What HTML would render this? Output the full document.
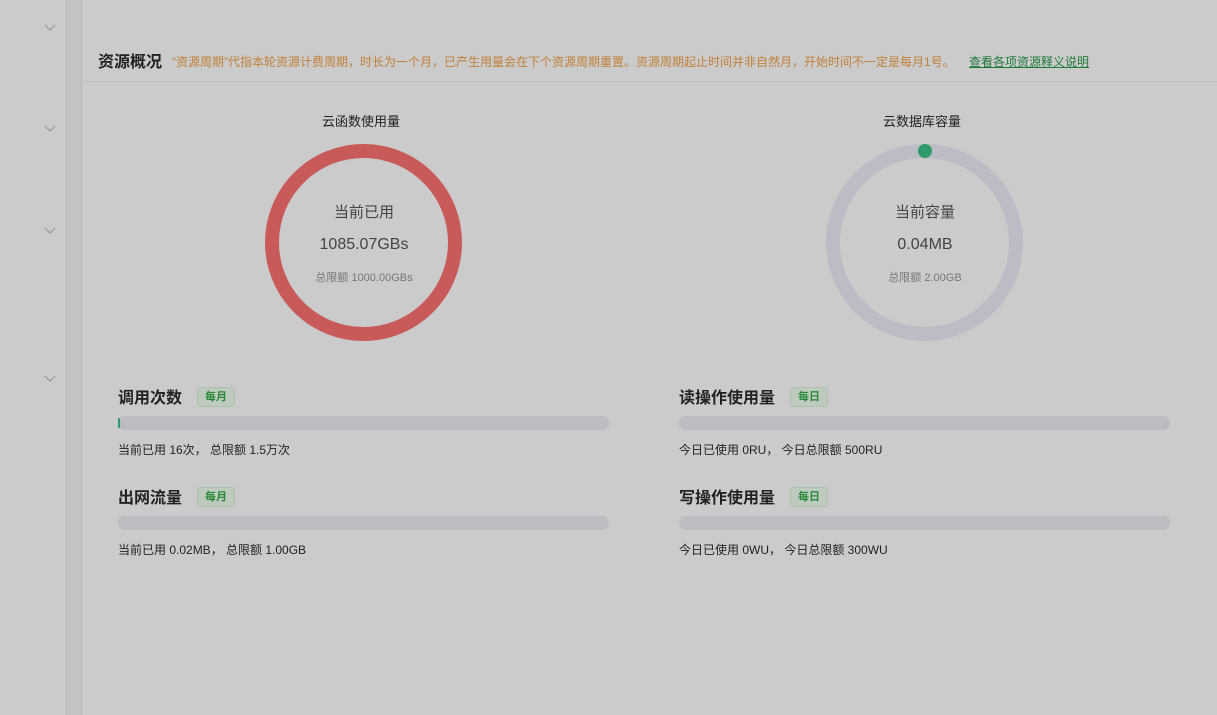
<!DOCTYPE html>
<html><head><meta charset="utf-8"><style>
*{margin:0;padding:0;box-sizing:border-box}
body{width:1217px;height:715px;background:#cbcbcb;font-family:"Liberation Sans","Noto Sans CJK SC",sans-serif;position:relative;overflow:hidden;color:#222}
.strip{position:absolute;left:66px;top:0;width:16px;height:715px;background:#c3c3c3;border-left:1px solid #bababa;border-right:1px solid #b8b8b8}
.chev{position:absolute;left:44px;width:12px;height:8px}
.abs{position:absolute;white-space:nowrap}
.hr{position:absolute;left:82px;right:0;top:81px;height:1px;background:#bcbcbc}
.title{font-size:16px;font-weight:bold;color:#222}
.tag{display:inline-block;font-size:11px;font-weight:bold;color:#2a8a3a;background:#bdcabd;border:1px solid #adc2ad;border-radius:3px;padding:2px 7px;line-height:14px}
.bar{position:absolute;width:491px;height:14px;border-radius:7px;background:#bcbdc2}
.small{font-size:12px;color:#222}
</style></head><body>
<svg class="chev" style="top:24px" viewBox="0 0 12 8"><path d="M1 1l5 5 5-5" fill="none" stroke="#999" stroke-width="1.2"/></svg>
<svg class="chev" style="top:125px" viewBox="0 0 12 8"><path d="M1 1l5 5 5-5" fill="none" stroke="#999" stroke-width="1.2"/></svg>
<svg class="chev" style="top:227px" viewBox="0 0 12 8"><path d="M1 1l5 5 5-5" fill="none" stroke="#999" stroke-width="1.2"/></svg>
<svg class="chev" style="top:375px" viewBox="0 0 12 8"><path d="M1 1l5 5 5-5" fill="none" stroke="#999" stroke-width="1.2"/></svg>
<div class="strip"></div>
<div class="abs title" style="left:98px;top:48px">资源概况</div>
<div class="abs" style="left:172px;top:53px;font-size:12px;color:#c0813a">“资源周期”代指本轮资源计费周期，时长为一个月，已产生用量会在下个资源周期重置。资源周期起止时间并非自然月，开始时间不一定是每月1号。</div>
<div class="abs" style="left:969px;top:53px;font-size:12px;color:#1f7a3a;text-decoration:underline">查看各项资源释义说明</div>
<div class="hr"></div>
<div class="abs" style="left:322px;top:111px;font-size:13px">云函数使用量</div>
<div class="abs" style="left:883px;top:111px;font-size:13px">云数据库容量</div>
<svg class="abs" style="left:0;top:0" width="1217" height="715">
<circle cx="363.5" cy="242.5" r="91.5" fill="none" stroke="#c85a5a" stroke-width="14"/>
<circle cx="924.5" cy="242.5" r="91.5" fill="none" stroke="#bbbcc6" stroke-width="14"/>
<circle cx="925" cy="151" r="7" fill="#2f9a6a"/>
</svg>
<div class="abs" style="left:264px;width:200px;text-align:center;top:201px;font-size:15px;color:#444">当前已用</div>
<div class="abs" style="left:264px;width:200px;text-align:center;top:236px;font-size:16px;color:#444">1085.07GBs</div>
<div class="abs" style="left:264px;width:200px;text-align:center;top:269px;font-size:11px;color:#777">总限额 1000.00GBs</div>
<div class="abs" style="left:825px;width:200px;text-align:center;top:201px;font-size:15px;color:#444">当前容量</div>
<div class="abs" style="left:825px;width:200px;text-align:center;top:236px;font-size:16px;color:#444">0.04MB</div>
<div class="abs" style="left:825px;width:200px;text-align:center;top:269px;font-size:11px;color:#777">总限额 2.00GB</div>

<div class="abs title" style="left:118px;top:384px">调用次数</div><div class="abs tag" style="left:197px;top:387px">每月</div>
<div class="bar" style="left:118px;top:416px"><div style="width:2px;height:10px;margin-top:2px;background:#2f9a6a;border-radius:1px"></div></div>
<div class="abs small" style="left:118px;top:441px">当前已用 16次， 总限额 1.5万次</div>
<div class="abs title" style="left:118px;top:484px">出网流量</div><div class="abs tag" style="left:197px;top:487px">每月</div>
<div class="bar" style="left:118px;top:516px"></div>
<div class="abs small" style="left:118px;top:541px">当前已用 0.02MB， 总限额 1.00GB</div>

<div class="abs title" style="left:679px;top:384px">读操作使用量</div><div class="abs tag" style="left:790px;top:387px">每日</div>
<div class="bar" style="left:679px;top:416px"></div>
<div class="abs small" style="left:679px;top:441px">今日已使用 0RU， 今日总限额 500RU</div>
<div class="abs title" style="left:679px;top:484px">写操作使用量</div><div class="abs tag" style="left:790px;top:487px">每日</div>
<div class="bar" style="left:679px;top:516px"></div>
<div class="abs small" style="left:679px;top:541px">今日已使用 0WU， 今日总限额 300WU</div>
</body></html>
